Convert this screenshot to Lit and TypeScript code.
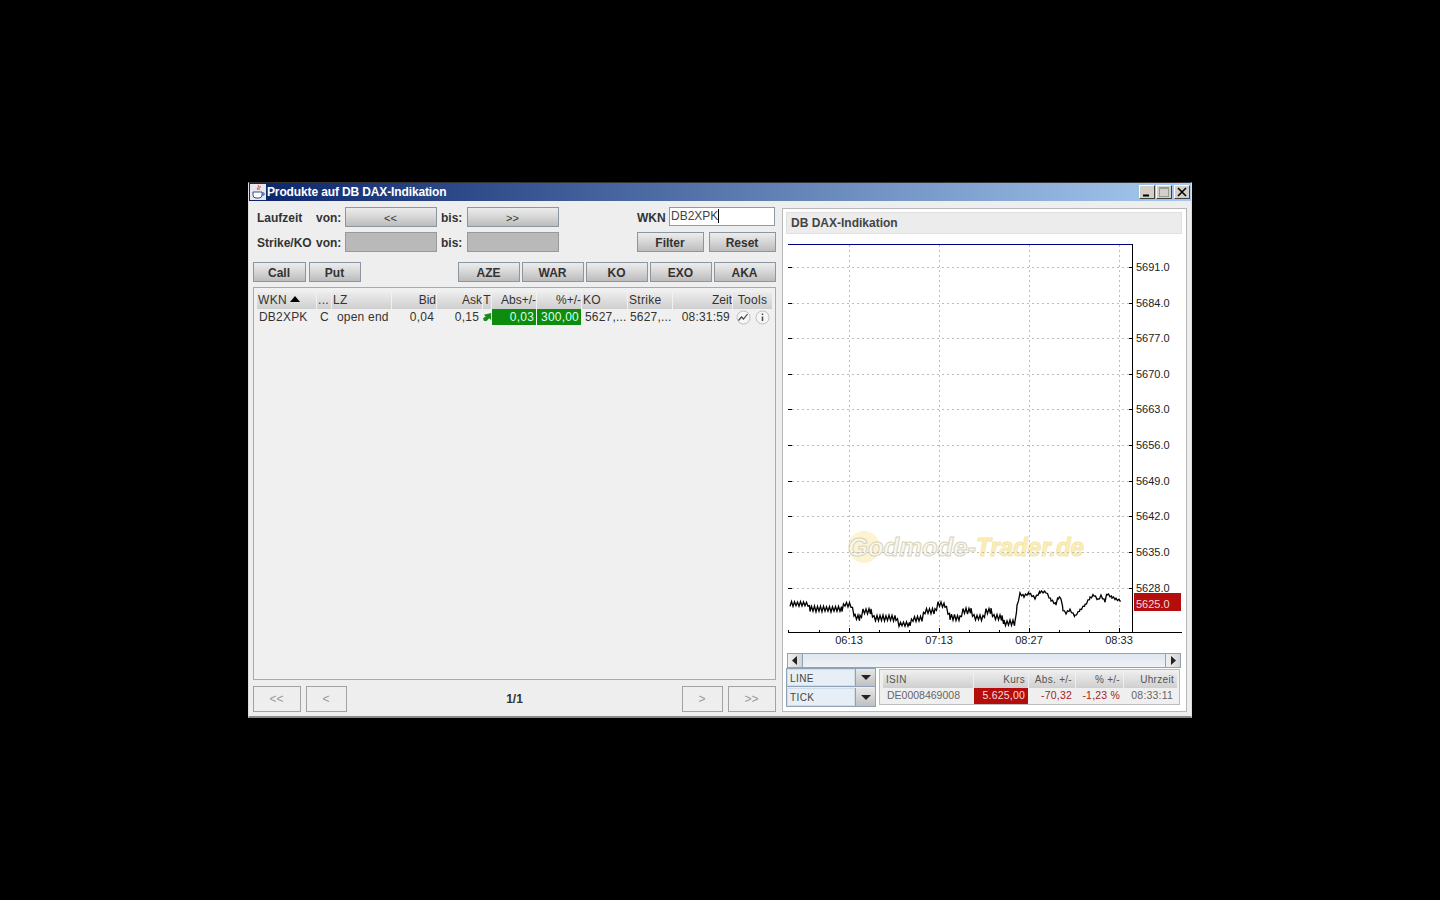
import { LitElement, html, css, svg } from 'lit';
import { customElement } from 'lit/decorators.js';

// base line of the tick chart, in page coordinates [x, y, jitter]
const TICKS: number[][] = [
  [790, 604, 2.5], [808, 604, 2.5], [810, 609, 3], [842, 609, 3], [845, 604, 2.5], [851, 605, 2.5],
  [855, 617, 3], [860, 618, 3], [863, 611, 3], [871, 611, 3], [874, 618, 3], [896, 618, 3],
  [899, 624, 2.5], [910, 624, 2.5], [913, 619, 3], [922, 619, 3], [925, 611, 3], [935, 611, 3],
  [938, 604, 2.5], [945, 605, 2.5], [950, 617, 3], [960, 618, 3], [963, 611, 3], [971, 611, 3],
  [974, 617, 3], [983, 618, 3], [986, 611, 3], [991, 611, 3], [994, 617, 3], [1002, 618, 3],
  [1004, 623, 3], [1015, 623, 2], [1017, 606, 1], [1020, 594, 1.2], [1024, 596, 1.2], [1029, 593, 1.2],
  [1035, 598, 1.2], [1040, 592, 1.2], [1046, 592, 1.2], [1051, 600, 1.2], [1056, 604, 1.2], [1058, 598, 1.2],
  [1061, 598, 1.2], [1063, 610, 1], [1066, 613, 1], [1070, 610, 1], [1075, 616, 1], [1080, 610, 1],
  [1085, 605, 1], [1090, 598, 1.2], [1094, 595, 1.2], [1098, 600, 1.2], [1101, 596, 1.2], [1105, 601, 1.2],
  [1107, 594, 1.2], [1112, 597, 1.2], [1116, 599, 1], [1121, 601, 1],
];

function tickPath(): string {
  let seed = 7;
  const out: string[] = [];
  let flip = 1;
  for (let s = 0; s < TICKS.length - 1; s++) {
    const [x0, y0, a0] = TICKS[s];
    const [x1, y1] = TICKS[s + 1];
    for (let x = x0; x < x1; x += 1.5) {
      const t = (x - x0) / (x1 - x0);
      seed = (seed * 137 + 29) % 1009;
      const jitter = a0 * flip * (0.7 + (seed % 10) / 30);
      flip = -flip;
      out.push(`${x.toFixed(1)},${(y0 + (y1 - y0) * t + jitter).toFixed(1)}`);
    }
  }
  return 'M' + out.join('L');
}

@customElement('dax-chart')
class DaxChart extends LitElement {
  static styles = css`
    :host { display: block; height: 418px; flex: none; }
    svg { display: block; width: 396px; height: 418px; }
    text { font-family: 'Liberation Sans', Arial, sans-serif; font-size: 11px; fill: #222; }
    .price { fill: #f4dcdc; }
    .grid { stroke: #bdbdbd; stroke-dasharray: 2 3; fill: none; }
    .axis { stroke: #000; fill: none; }
    .wm { font-family: 'Liberation Sans', sans-serif; font-size: 26px; font-style: italic; font-weight: bold; stroke-width: 1; }
    .wm1 { fill: #f8f8f3; stroke: #d8d3bc; }
    .wm2 { fill: #fbeeba; stroke: #f5e6aa; }
  `;

  render() {
    const levels: [number, string][] = [
      [267, '5691.0'], [303, '5684.0'], [338, '5677.0'], [374, '5670.0'], [409, '5663.0'],
      [445, '5656.0'], [481, '5649.0'], [516, '5642.0'], [552, '5635.0'], [588, '5628.0'],
    ];
    const times: [number, string][] = [[849, '06:13'], [939, '07:13'], [1029, '08:27'], [1119, '08:33']];
    const minor = [788, 819, 879, 909, 969, 999, 1059, 1089];
    return html`<svg viewBox="786 234 396 418">
      <rect x="786" y="234" width="396" height="418" fill="#fff"></rect>
      ${svg`<circle cx="864" cy="547" r="16" fill="#fbf3d2"></circle>
        <text class="wm wm1" x="848" y="556" textLength="128" lengthAdjust="spacingAndGlyphs">Godmode-</text>
        <text class="wm wm2" x="976" y="556" textLength="108" lengthAdjust="spacingAndGlyphs">Trader.de</text>`}
      ${levels.map(([y, label]) => svg`
        <path class="grid" d="M792 ${y + 0.5}H1129"></path>
        <path class="axis" d="M788 ${y + 0.5}H792M1129 ${y + 0.5}H1132"></path>
        <text x="1136" y="${y + 4}">${label}</text>`)}
      ${times.map(([x, label]) => svg`
        <path class="grid" d="M${x + 0.5} 245V628"></path>
        <path class="axis" d="M${x + 0.5} 628V632"></path>
        <text x="${x}" y="644" text-anchor="middle">${label}</text>`)}
      ${minor.map((x) => svg`<path class="axis" d="M${x + 0.5} 630V632"></path>`)}
      <path d="M788 244.5H1132" stroke="#000080" fill="none"></path>
      <path class="axis" d="M1132.5 244V632M788 632.5H1182"></path>
      <path d=${tickPath()} stroke="#000" stroke-width="1.3" fill="none"></path>
      <rect x="1134" y="593" width="47" height="18" fill="#b50c0c"></rect>
      <text class="price" x="1136" y="608">5625.0</text>
    </svg>`;
  }
}

const COLS = [
  { t: 'WKN', c: 'l' }, { t: '...', c: 'l' }, { t: 'LZ', c: 'l' }, { t: 'Bid', c: 'r' },
  { t: 'Ask', c: 'r' }, { t: 'T', c: 'c' }, { t: 'Abs+/-', c: 'r' }, { t: '%+/-', c: 'r' },
  { t: 'KO', c: 'l' }, { t: 'Strike', c: 'l' }, { t: 'Zeit', c: 'r' }, { t: 'Tools', c: 'c' },
];

@customElement('app-root')
export class AppRoot extends LitElement {
  static styles = css`
    :host {
      display: flex; align-items: center; justify-content: center;
      width: 1440px; height: 900px; background: #000;
      font-family: 'Liberation Sans', Arial, sans-serif; font-size: 12px; color: #333;
    }
    .window {
      width: 944px; height: 536px; box-sizing: border-box; background: #eee;
      border-top: 1px solid #333; border-left: 1px solid #ddd; border-right: 1px solid #ddd; border-bottom: 2px solid #888;
      display: flex; flex-direction: column;
    }
    .title {
      height: 18px; flex: none; display: flex; align-items: center; padding: 0 1px;
      background: linear-gradient(90deg, #0a246a, #a6caf0);
      color: #fff; font-weight: bold; font-size: 12px; letter-spacing: -0.13px;
    }
    .title svg { margin-right: 1px; }
    .title span { flex: 1; }
    .wb {
      width: 16px; height: 14px; box-sizing: border-box; margin-left: 1px; background: #d4d0c8;
      border: 1px solid; border-color: #fff #404040 #404040 #fff; display: flex;
    }
    .wb svg { margin: 0; }
    .wb.last { margin-left: 2px; }
    .main { flex: 1; display: flex; gap: 6px; padding: 6px 4px 5px 4px; }
    .left { width: 523px; display: flex; flex-direction: column; }
    .form {
      display: grid; grid-template-columns: 59px 29px 92px 30px 92px 78px 139px;
      grid-auto-rows: 20px; row-gap: 5px; padding-left: 4px; align-items: center; font-weight: bold;
    }
    .form > div:not(.btn):not(.cell) { padding-top: 1px; }
    .bis { padding-left: 4px; }
    .cell { display: flex; justify-content: space-between; align-items: center; height: 20px; }
    .cell b { font-weight: bold; padding-top: 1px; }
    .caret { border-right: 1px solid #000; }
    .fake-input {
      width: 106px; height: 19px; box-sizing: border-box; border: 1px solid #8c9bab; background: #fff; padding: 0 1px; margin: 0 1px 1px 0;
      font-weight: normal; color: #444; line-height: 17px;
    }
    .btn {
      box-sizing: border-box; height: 20px; display: flex; align-items: center; justify-content: center;
      border: 1px solid #8a96a2; background: linear-gradient(#ececec, #d8d8d8 45%, #bcbcbc);
      font-weight: bold; color: #333; padding: 1px 1px 0 0;
    }
    .btn.thin { font-weight: normal; font-size: 11px; }
    .btn.off { background: #b9b9b9; border-color: #999; }
    .btn.w67 { width: 67px; }
    .btn.w62 { width: 62px; }
    .tabs { display: flex; gap: 2px; margin-top: 10px; }
    .tabs .call { width: 53px; margin-right: 1px; }
    .tabs .put { width: 52px; }
    .tabs .sp { flex: 1; }
    .table { margin-top: 5px; height: 393px; box-sizing: border-box; border: 1px solid #aaa; padding: 4px 2px 0 3px; background: #f0f0f0; }
    .tgrid { display: grid; grid-template-columns: 60px 15px 60px 45px 46px 9px 45px 45px 46px 45px 60px 40px; }
    .th {
      height: 17px; line-height: 17px; box-sizing: border-box; margin-right: 1px; padding: 0 1px; white-space: nowrap; overflow: hidden;
      background: linear-gradient(#ececec, #cfcfcf); color: #333; display: flex; align-items: center; letter-spacing: 0.3px;
    }
    .th.r { justify-content: flex-end; padding: 0; letter-spacing: 0; }
    .th.c { justify-content: center; padding: 0; }
    .tri { width: 0; height: 0; border: 5px solid transparent; border-top: 0; border-bottom: 6px solid #000; margin: 0 0 3px 3px; }
    .td { height: 16px; line-height: 16px; white-space: nowrap; display: flex; align-items: center; color: #333; letter-spacing: 0.2px; }
    .td.r { justify-content: flex-end; }
    .td.c { justify-content: center; }
    .g { background: #0e8c0e; color: #dfe; margin-right: 1px; padding-right: 2px; }
    .nav { display: flex; align-items: center; margin-top: 6px; height: 26px; gap: 5px; }
    .nbtn { box-sizing: border-box; height: 26px; border: 1px solid #a2a2a2; color: #999; display: flex; align-items: center; justify-content: center; font-size: 12px; padding-right: 1px; }
    .w48 { width: 48px; }
    .w41 { width: 41px; }
    .pager { flex: 1; text-align: center; font-weight: bold; padding-right: 4px; padding-left: 4px; font-size: 12px; }
    .panel { width: 405px; height: 504px; box-sizing: border-box; border: 1px solid #b8b8b8; background: #fff; padding: 3px; margin-top: 1px; display: flex; flex-direction: column; }
    .phead {
      width: 396px; height: 22px; flex: none; box-sizing: border-box; padding-left: 4px; background: #ececec; border: 1px solid #e0e0e0;
      font-weight: bold; color: #444; line-height: 20px;
    }
    .scroll { margin: 1px 0 0 1px; width: 394px; height: 15px; flex: none; display: flex; box-sizing: border-box; border: 1px solid #8fa3b8; background: #e4eaf0; }
    .sbtn { width: 14px; background: linear-gradient(90deg, #f0f0f0, #d4d4d4); display: flex; align-items: center; justify-content: center; }
    .sl { border-right: 1px solid #8fa3b8; }
    .sr { border-left: 1px solid #8fa3b8; }
    .strack { flex: 1; background: linear-gradient(#dfe7ef, #eef2f6); }
    .bottom { display: flex; gap: 3px; }
    .combos { width: 90px; display: flex; flex-direction: column; }
    .combo { height: 19px; box-sizing: border-box; border: 1px solid #8fa3b8; display: flex; background: #e8eef5; font-size: 10px; color: #444; letter-spacing: 0.4px; }
    .combo + .combo { border-top: 0; height: 20px; padding-top: 1px; }
    .combo span { flex: 1; padding-left: 2px; line-height: 17px; border: 1px solid #cfdce9; }
    .arrow { width: 19px; border-left: 1px solid #8fa3b8; background: linear-gradient(#e6e6e6, #c0c0c0); display: flex; align-items: center; justify-content: center; }
    .arrow i { width: 0; height: 0; border: 5px solid transparent; border-bottom: 0; border-top: 5px solid #222; }
    .mini { width: 301px; height: 36px; box-sizing: border-box; border: 1px solid #bcbcbc; background: #efefef; padding: 2px 0 0 3px; margin-top: 1px; font-size: 10.5px; }
    .mgrid { display: grid; grid-template-columns: 91px 55px 47px 48px 54px; }
    .mth { height: 16px; line-height: 16px; margin-right: 1px; background: linear-gradient(#ececec, #cfcfcf); color: #555; padding: 0 3px; text-align: right; font-size: 10px; letter-spacing: 0.3px; }
    .mth.l { text-align: left; }
    .mtd { height: 16px; line-height: 15px; padding: 0 4px 0 3px; text-align: right; color: #a52020; letter-spacing: 0.2px; }
    .mtd.l { text-align: left; color: #666; padding-left: 4px; letter-spacing: 0; }
    .mtd.k { background: #b50c0c; color: #f6dede; margin-right: 1px; padding-right: 3px; }
    .mtd.t { color: #666; padding-right: 5px; }
  `;

  private javaIcon() {
    return html`<svg width="16" height="16" viewBox="0 0 16 16">
      <rect width="16" height="16" fill="#e8e4f0"></rect>
      <path d="M8 1c2 2-2 3 0 5M10 2c1 2-2 2-1 4" stroke="#d2521e" fill="none"></path>
      <path d="M3 8h9v3a3 3 0 0 1-3 3H6a3 3 0 0 1-3-3zM12 9h2v2h-2" stroke="#2f4f8f" fill="#fff"></path>
    </svg>`;
  }

  private chartIcon() {
    return html`<svg width="15" height="15" viewBox="0 0 15 15">
      <circle cx="7.5" cy="7.5" r="6.5" fill="#f6f6f6" stroke="#c0c0c0"></circle>
      <path d="M2.5 10.5l3-3.5 2 2 4-5" stroke="#444" stroke-width="1.2" fill="none"></path>
    </svg>`;
  }

  private infoIcon() {
    return html`<svg width="15" height="15" viewBox="0 0 15 15">
      <circle cx="7.5" cy="7.5" r="6.5" fill="#f6f6f6" stroke="#c0c0c0"></circle>
      <path d="M7.5 3.5v1.5M7.5 6.5v4.5" stroke="#444" stroke-width="1.5" fill="none"></path>
    </svg>`;
  }

  render() {
    return html`<div class="window">
      <div class="title">
        ${this.javaIcon()}
        <span>Produkte auf DB DAX-Indikation</span>
        <div class="wb"><svg width="14" height="12"><path d="M3 9.5h6" stroke="#000" stroke-width="2"></path></svg></div>
        <div class="wb"><svg width="14" height="12"><rect x="2.5" y="1.5" width="9" height="9" fill="none" stroke="#999"></rect><path d="M2 2.5h10" stroke="#999"></path></svg></div>
        <div class="wb last"><svg width="14" height="12"><path d="M3 2l8 8M11 2l-8 8" stroke="#000" stroke-width="1.6"></path></svg></div>
      </div>
      <div class="main">
        <div class="left">
          <div class="form">
            <div>Laufzeit</div><div>von:</div>
            <div class="btn thin">&lt;&lt;</div>
            <div class="bis">bis:</div>
            <div class="btn thin">&gt;&gt;</div>
            <div></div>
            <div class="cell"><b>WKN</b><div class="fake-input"><span class="caret">DB2XPK</span></div></div>
            <div>Strike/KO</div><div>von:</div>
            <div class="btn off"></div>
            <div class="bis">bis:</div>
            <div class="btn off"></div>
            <div></div>
            <div class="cell"><div class="btn w67">Filter</div><div class="btn w67">Reset</div></div>
          </div>
          <div class="tabs">
            <div class="btn call">Call</div>
            <div class="btn put">Put</div>
            <div class="sp"></div>
            ${['AZE', 'WAR', 'KO', 'EXO', 'AKA'].map((t) => html`<div class="btn w62">${t}</div>`)}
          </div>
          <div class="table">
            <div class="tgrid">
              ${COLS.map((c, i) => html`<div class="th ${c.c}">${c.t}${i === 0 ? html`<span class="tri"></span>` : ''}</div>`)}
              <div class="td" style="padding-left:2px">DB2XPK</div>
              <div class="td c">C</div>
              <div class="td" style="padding-left:5px">open end</div>
              <div class="td r" style="padding-right:3px">0,04</div>
              <div class="td r" style="padding-right:4px">0,15</div>
              <div class="td c"><svg width="10" height="10" viewBox="0 0 10 10"><path d="M1 9.5l-1-3 3-2-2-2 8-2v8l-2-2-3 3z" fill="#1c8a1c"></path></svg></div>
              <div class="td r g">0,03</div>
              <div class="td r g">300,00</div>
              <div class="td" style="padding-left:3px">5627,...</div>
              <div class="td" style="padding-left:2px">5627,...</div>
              <div class="td r" style="padding-right:3px">08:31:59</div>
              <div class="td" style="padding-left:3px;gap:4px">${this.chartIcon()}${this.infoIcon()}</div>
            </div>
          </div>
          <div class="nav">
            <div class="nbtn w48">&lt;&lt;</div>
            <div class="nbtn w41">&lt;</div>
            <div class="pager">1/1</div>
            <div class="nbtn w41">&gt;</div>
            <div class="nbtn w48">&gt;&gt;</div>
          </div>
        </div>
        <div class="panel">
          <div class="phead">DB DAX-Indikation</div>
          <dax-chart></dax-chart>
          <div class="scroll">
            <div class="sbtn sl"><svg width="6" height="9"><path d="M5 0v9L0 4.5z" fill="#222"></path></svg></div>
            <div class="strack"></div>
            <div class="sbtn sr"><svg width="6" height="9"><path d="M1 0v9l5-4.5z" fill="#222"></path></svg></div>
          </div>
          <div class="bottom">
            <div class="combos">
              <div class="combo"><span>LINE</span><div class="arrow"><i></i></div></div>
              <div class="combo"><span>TICK</span><div class="arrow"><i></i></div></div>
            </div>
            <div class="mini">
              <div class="mgrid">
                <div class="mth l">ISIN</div><div class="mth">Kurs</div><div class="mth">Abs. +/-</div><div class="mth">% +/-</div><div class="mth">Uhrzeit</div>
                <div class="mtd l">DE0008469008</div><div class="mtd k">5.625,00</div><div class="mtd">-70,32</div><div class="mtd">-1,23 %</div><div class="mtd t">08:33:11</div>
              </div>
            </div>
          </div>
        </div>
      </div>
    </div>`;
  }
}
